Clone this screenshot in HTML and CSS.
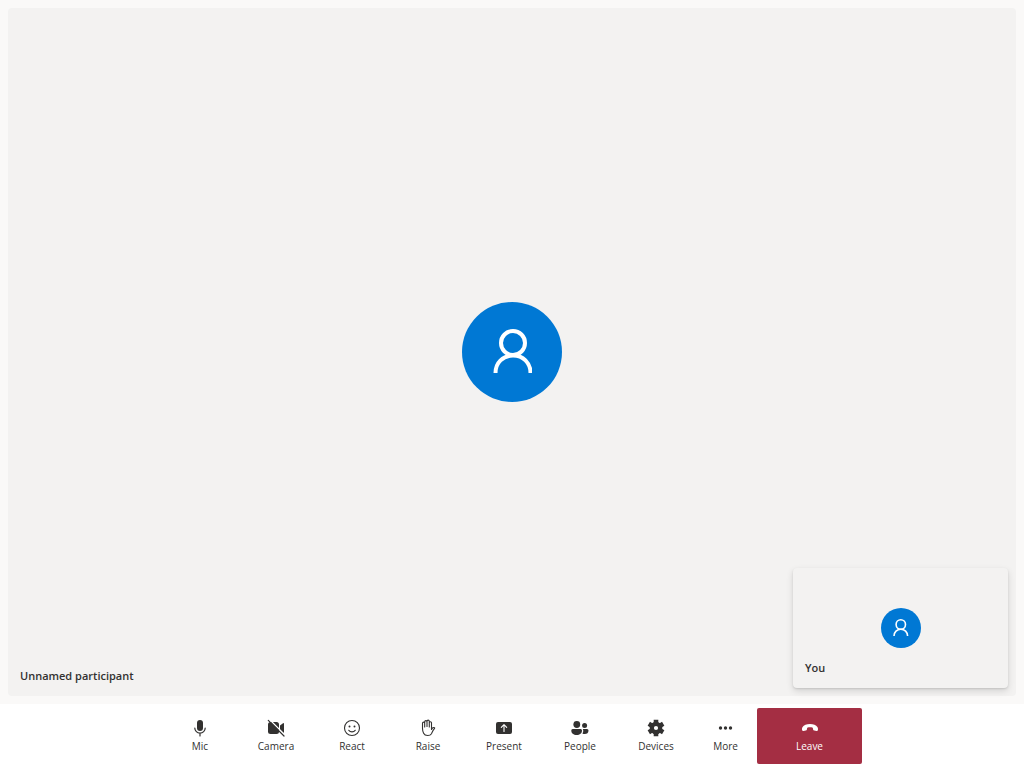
FILE: index.html
```html
<!DOCTYPE html>
<html lang="en">
<head>
<meta charset="utf-8">
<meta name="viewport" content="width=device-width, initial-scale=1">
<title>Call</title>
<link rel="stylesheet" href="styles.css">
</head>
<body>
<main class="stage">
  <section class="tile" aria-label="Unnamed participant">
    <div class="avatar avatar-large">
      <svg class="person-large" viewBox="0 0 40 46"><circle cx="21" cy="14" r="12"/><path d="M3.500 44C3.500 33.500 11 26.500 21 26.500S38.500 33.500 38.500 44"/></svg>
    </div>
    <span class="name">Unnamed participant</span>
  </section>
  <section class="tile self-view" aria-label="You">
    <div class="avatar avatar-small">
      <svg class="person-small" viewBox="0 0 16 18"><circle cx="7.800" cy="5.500" r="4.700"/><path d="M1 17C1 13 4 10.200 7.800 10.200s6.800 2.800 6.800 6.800"/></svg>
    </div>
    <span class="name">You</span>
  </section>
</main>
<nav class="controls" aria-label="Call controls">
  <button class="control" type="button">
    <svg class="icon" viewBox="0 0 20 20"><rect x="7" y="2" width="6" height="11" rx="3" fill="currentColor"/><path d="M4.800 10a5.200 5.200 0 0 0 10.400 0M10 15.200V18" fill="none" stroke="currentColor" stroke-width="1.200" stroke-linecap="round"/></svg>
    <span>Mic</span>
  </button>
  <button class="control" type="button">
    <svg class="icon" viewBox="0 0 20 20"><rect x="2" y="4" width="11" height="12" rx="2.500" fill="currentColor"/><path d="M14 7.500l3-2.300q1-.6 1 .5v8.600q0 1.100-1 .5l-3-2.300z" fill="currentColor"/><path d="M3.500 1.500L19 17" stroke="#fff" stroke-width="1.300"/><path d="M2.300 2.300L18 18" stroke="currentColor" stroke-width="1.200" stroke-linecap="round"/></svg>
    <span>Camera</span>
  </button>
  <button class="control" type="button">
    <svg class="icon" viewBox="0 0 20 20"><circle cx="10" cy="10" r="7.500" fill="none" stroke="currentColor" stroke-width="1.100"/><circle cx="7.500" cy="8.500" r="1" fill="currentColor"/><circle cx="12.500" cy="8.500" r="1" fill="currentColor"/><path d="M6.800 12.300a4 4 0 0 0 6.400 0" fill="none" stroke="currentColor" stroke-width="1.100" stroke-linecap="round"/></svg>
    <span>React</span>
  </button>
  <button class="control" type="button">
    <svg class="icon" viewBox="0 0 20 20"><path d="M4.500 10.500V5.200a1.100 1.100 0 0 1 2.200 0V9V3.800a1.150 1.150 0 0 1 2.300 0V8.500V3.300a1.150 1.150 0 0 1 2.300 0V9V4.800a1.100 1.100 0 0 1 2.200 0V11.500C14 10.300 15.200 9.200 16.500 9.700C17 10 16.500 10.600 16 11.200C14.800 12.700 14.300 14.200 13.500 15.700C12.600 17.200 11.300 17.500 9.700 17.500C7.500 17.500 6.300 16.700 5.600 15.200C4.900 13.700 4.500 12.200 4.500 10.500Z" fill="none" stroke="currentColor" stroke-width="1.100" stroke-linejoin="round"/></svg>
    <span>Raise</span>
  </button>
  <button class="control" type="button">
    <svg class="icon" viewBox="0 0 20 20"><rect x="2" y="4" width="16" height="12" rx="2" fill="currentColor"/><path d="M10 13.500V7M7.300 9.300L10 6.600l2.700 2.700" fill="none" stroke="#fff" stroke-width="1.100" stroke-linecap="round" stroke-linejoin="round"/></svg>
    <span>Present</span>
  </button>
  <button class="control" type="button">
    <svg class="icon" viewBox="0 0 20 20" fill="currentColor"><circle cx="6.800" cy="6.500" r="3.400"/><circle cx="14.600" cy="7.500" r="2.500"/><path d="M2.700 11h8a1.400 1.400 0 0 1 1.300 1.500c0 2.900-2.200 4.500-5.300 4.500s-5.400-1.600-5.400-4.500A1.400 1.400 0 0 1 2.700 11z"/><path d="M12.800 11h4.200a1.500 1.500 0 0 1 1.500 1.500c0 2.400-1.500 3.500-3.700 3.500q-1.400 0-2.400-.5c.9-1.200 1.200-3.200.4-4.500z"/></svg>
    <span>People</span>
  </button>
  <button class="control" type="button">
    <svg class="icon" viewBox="0 0 20 20"><circle cx="10" cy="10" r="4.200" fill="none" stroke="currentColor" stroke-width="4.200"/><path d="M10 1.700v3.800M10 14.500v3.800M2.800 5.850l3.200 1.900M14 12.250l3.200 1.900M2.800 14.150l3.200-1.900M14 7.750l3.200-1.900" fill="none" stroke="currentColor" stroke-width="4.600"/></svg>
    <span>Devices</span>
  </button>
  <button class="control control-more" type="button">
    <svg class="icon" viewBox="0 0 20 20" fill="currentColor"><circle cx="4.500" cy="10" r="1.700"/><circle cx="9.500" cy="10" r="1.700"/><circle cx="14.500" cy="10" r="1.700"/></svg>
    <span>More</span>
  </button>
  <button class="control control-leave" type="button">
    <svg class="icon" viewBox="0 0 20 20" fill="currentColor"><path d="M10 6c3.400 0 6.200 1.100 7.400 3c.6 1 .8 2 .5 3.200c-.2.600-.8.900-1.400.8l-2.300-.4c-.6-.1-1-.5-1.100-1.100l-.3-1.700c-1.800-.6-3.800-.6-5.600 0l-.3 1.700c-.1.600-.5 1-1.100 1.100l-2.300.4c-.6.100-1.200-.2-1.400-.8c-.3-1.200-.1-2.200.5-3.200c1.200-1.900 4-3 7.400-3z"/></svg>
    <span>Leave</span>
  </button>
</nav>
</body>
</html>
```
FILE: styles.css
```css
* { box-sizing: border-box; }

body {
  margin: 0;
  min-height: 100vh;
  display: flex;
  flex-direction: column;
  background: #fff;
  color: #323130;
  font-family: "Segoe UI", "Open Sans", "Noto Sans", sans-serif;
}

.stage {
  position: relative;
  flex: 1;
  display: flex;
  padding: 8px;
  background: #faf9f8;
}

.tile {
  flex: 1;
  display: grid;
  grid-template-areas: "cell";
  background: #f3f2f1;
  border-radius: 4px;
}

.self-view {
  position: absolute;
  right: 16px;
  bottom: 16px;
  width: 215px;
  height: 120px;
  box-shadow: 0 3px 7px rgba(0, 0, 0, .13), 0 1px 2px rgba(0, 0, 0, .11);
}

.avatar {
  grid-area: cell;
  place-self: center;
  display: grid;
  place-items: center;
  border-radius: 50%;
  background: #0078d4;
  color: #fff;
}

.avatar svg {
  fill: none;
  stroke: currentColor;
}

.avatar-large { width: 100px; height: 100px; }
.avatar-small { width: 40px; height: 40px; }
.person-large { width: 40px; height: 46px; stroke-width: 4; }
.person-small { width: 16px; height: 18px; stroke-width: 1.6; }

.name {
  grid-area: cell;
  place-self: end start;
  padding: 12px;
  font-size: 11px;
  line-height: 16px;
  font-weight: 600;
}

.controls {
  display: flex;
  justify-content: center;
  padding: 4px;
}

.control {
  width: 76px;
  height: 56px;
  display: flex;
  flex-direction: column;
  align-items: center;
  justify-content: center;
  padding: 0;
  border: 0;
  border-radius: 2px;
  background: #fff;
  color: #323130;
  font-family: inherit;
  font-size: 10px;
  line-height: 16px;
  cursor: pointer;
}

.control-more { width: 63px; }

.control-leave {
  width: 105px;
  background: #a42e43;
  color: #fff;
}

.icon {
  width: 20px;
  height: 20px;
}
```
